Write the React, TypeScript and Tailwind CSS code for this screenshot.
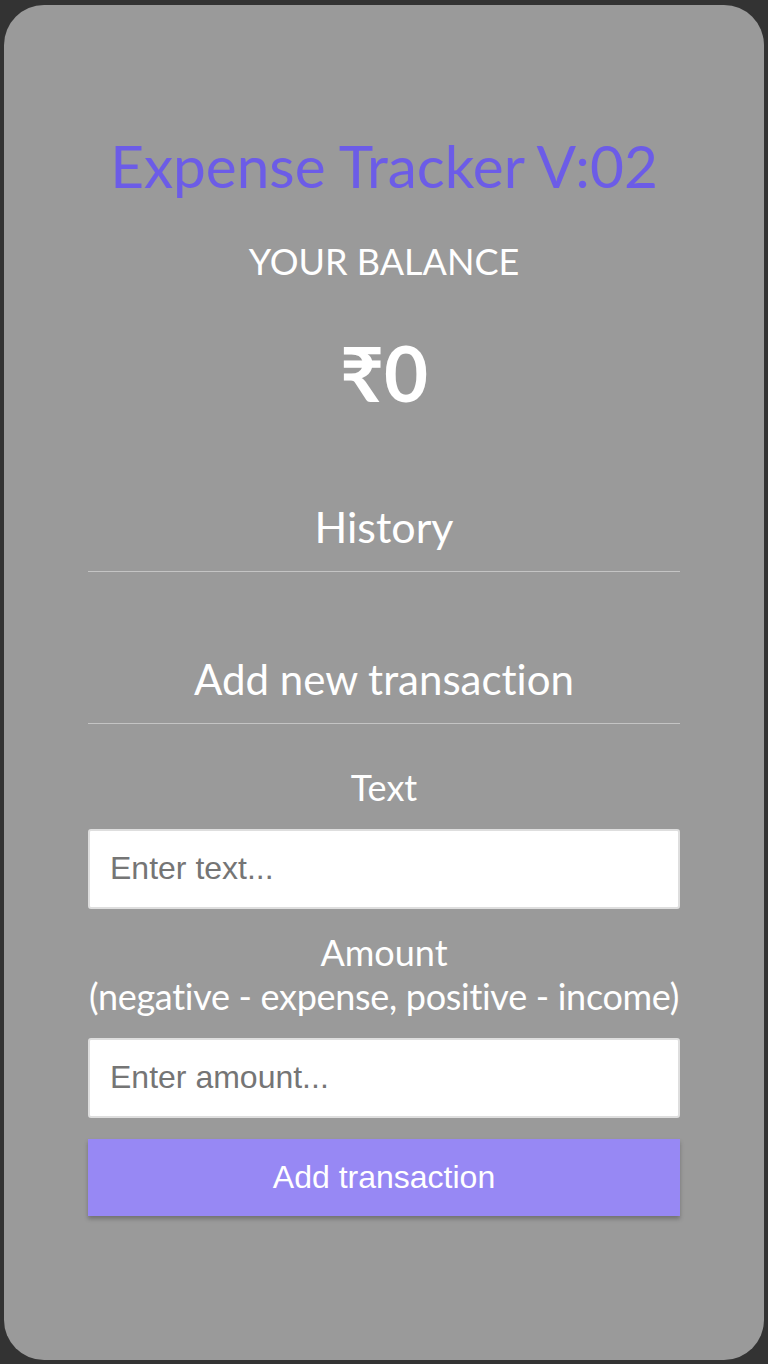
import React from "react";

export default function App() {
  return (
    <div
      className="min-h-[1364px] bg-[#333333] pt-[5px] px-[4px] pb-[4px] [font-variant-ligatures:none]"
      style={{ fontFamily: "Lato, 'Noto Sans', sans-serif" }}
    >
      <div className="h-[1355px] rounded-[40px] bg-[#9a9a9a] px-[84px] pt-[131px] flex flex-col items-stretch text-center">
        <h1 className="text-[58.5px] leading-none text-[#6c5ce7] font-normal">Expense Tracker V:02</h1>
        <h4 className="mt-[48px] text-[36px] leading-none text-white uppercase font-normal">Your Balance</h4>
        <h1 className="mt-[56px] text-[76px] leading-none text-white font-bold">₹0</h1>
        <h3 className="mt-[94px] text-[43px] leading-none text-white font-normal">History</h3>
        <div className="mt-[23px] h-[1px] bg-[#c4c4c4]" />
        <h3 className="mt-[86px] text-[42px] leading-none text-white font-normal">Add new transaction</h3>
        <div className="mt-[23px] h-[1px] bg-[#c4c4c4]" />
        <label className="mt-[41px] text-[36px] leading-[44px] text-white">Text</label>
        <input
          type="text"
          placeholder="Enter text..."
          className="mt-[20px] h-[80px] w-full bg-white border-2 border-[#dedede] rounded-[3px] px-[20px] text-[32px] text-black placeholder:text-[#757575] outline-none"
          style={{ fontFamily: "'Liberation Sans', Arial, sans-serif" }}
        />
        <label className="mt-[21px] text-[36px] leading-[44px] text-white flex flex-col items-center">
          <span>Amount</span>
          <span className="whitespace-nowrap tracking-[-0.3px]">(negative - expense, positive - income)</span>
        </label>
        <input
          type="number"
          placeholder="Enter amount..."
          className="mt-[20px] h-[80px] w-full bg-white border-2 border-[#dedede] rounded-[3px] px-[20px] text-[32px] text-black placeholder:text-[#757575] outline-none"
          style={{ fontFamily: "'Liberation Sans', Arial, sans-serif" }}
        />
        <button
          className="mt-[21px] h-[77px] w-full bg-[#9788f4] text-white text-[32px] shadow-[0_3px_4px_rgba(0,0,0,0.25)]"
          style={{ fontFamily: "'Liberation Sans', Arial, sans-serif" }}
        >
          Add transaction
        </button>
      </div>
    </div>
  );
}
